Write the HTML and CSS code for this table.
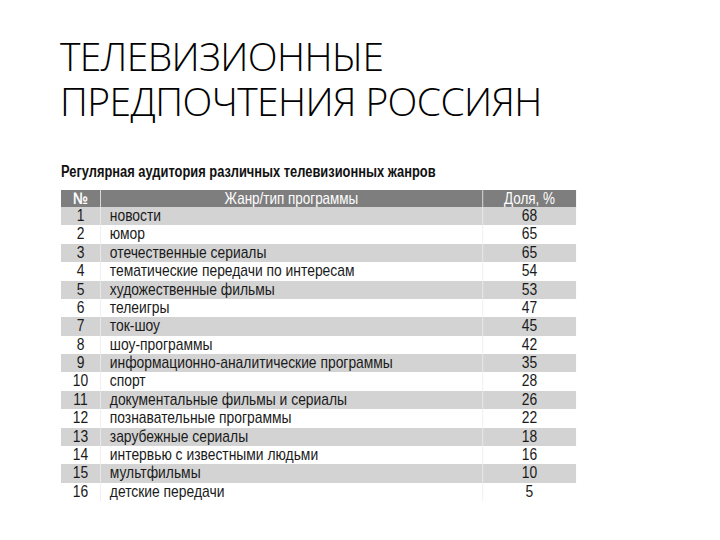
FILE: index.html
```html
<!DOCTYPE html>
<html lang="ru">
<head>
<meta charset="utf-8">
<link rel="stylesheet" href="styles.css">
</head>
<body>
<h1 class="title">ТЕЛЕВИЗИОННЫЕ<br>ПРЕДПОЧТЕНИЯ РОССИЯН</h1>
<div class="block">
  <div class="caption">Регулярная аудитория различных телевизионных жанров</div>
  <div class="table">
    <div class="row head"><div class="c num">№</div><div class="c genre">Жанр/тип программы</div><div class="c share">Доля, %</div></div>
    <div class="row odd"><div class="c num">1</div><div class="c genre">новости</div><div class="c share">68</div></div>
    <div class="row"><div class="c num">2</div><div class="c genre">юмор</div><div class="c share">65</div></div>
    <div class="row odd"><div class="c num">3</div><div class="c genre">отечественные сериалы</div><div class="c share">65</div></div>
    <div class="row"><div class="c num">4</div><div class="c genre">тематические передачи по интересам</div><div class="c share">54</div></div>
    <div class="row odd"><div class="c num">5</div><div class="c genre">художественные фильмы</div><div class="c share">53</div></div>
    <div class="row"><div class="c num">6</div><div class="c genre">телеигры</div><div class="c share">47</div></div>
    <div class="row odd"><div class="c num">7</div><div class="c genre">ток-шоу</div><div class="c share">45</div></div>
    <div class="row"><div class="c num">8</div><div class="c genre">шоу-программы</div><div class="c share">42</div></div>
    <div class="row odd"><div class="c num">9</div><div class="c genre">информационно-аналитические программы</div><div class="c share">35</div></div>
    <div class="row"><div class="c num">10</div><div class="c genre">спорт</div><div class="c share">28</div></div>
    <div class="row odd"><div class="c num">11</div><div class="c genre">документальные фильмы и сериалы</div><div class="c share">26</div></div>
    <div class="row"><div class="c num">12</div><div class="c genre">познавательные программы</div><div class="c share">22</div></div>
    <div class="row odd"><div class="c num">13</div><div class="c genre">зарубежные сериалы</div><div class="c share">18</div></div>
    <div class="row"><div class="c num">14</div><div class="c genre">интервью с известными людьми</div><div class="c share">16</div></div>
    <div class="row odd"><div class="c num">15</div><div class="c genre">мультфильмы</div><div class="c share">10</div></div>
    <div class="row"><div class="c num">16</div><div class="c genre">детские передачи</div><div class="c share">5</div></div>
  </div>
</div>
</body>
</html>
```
FILE: styles.css
```css
html, body {
  margin: 0;
  padding: 0;
  background: #ffffff;
}
body {
  width: 720px;
  height: 540px;
  overflow: hidden;
}
.title {
  margin: 33px 0 0 60px;
  font-family: "Open Sans", "Noto Sans", sans-serif;
  font-weight: 300;
  font-size: 39px;
  line-height: 45px;
  color: #000000;
  letter-spacing: -0.6px;
}
.block {
  margin: 39.5px 0 0 61px;
  width: 632px;
  transform: scaleX(0.815);
  transform-origin: 0 0;
  font-family: "Liberation Sans", Arial, sans-serif;
}
.caption {
  font-weight: bold;
  font-size: 15.8px;
  line-height: 18px;
  color: #111111;
  margin-bottom: 9.5px;
  white-space: nowrap;
}
.table {
  display: flex;
  flex-direction: column;
}
.row {
  display: grid;
  grid-template-columns: 47.9px 468.7px 115.4px;
  height: 18.375px;
  font-size: 17px;
  line-height: 18.375px;
  color: #1a1a1a;
}
.row.odd {
  background: #d3d3d3;
}
.row.head {
  height: 17px;
  background: #7e7e7e;
  color: #ffffff;
  line-height: 17px;
  font-size: 16.5px;
}
.row.head .num {
  font-weight: bold;
}
.row.head .genre {
  text-align: center;
  padding-left: 0;
}
.c {
  white-space: nowrap;
  overflow: hidden;
}
.num {
  text-align: center;
}
.genre {
  padding-left: 11px;
  border-left: 1px solid #ececec;
}
.share {
  text-align: center;
  border-left: 1px solid #ececec;
}
```
